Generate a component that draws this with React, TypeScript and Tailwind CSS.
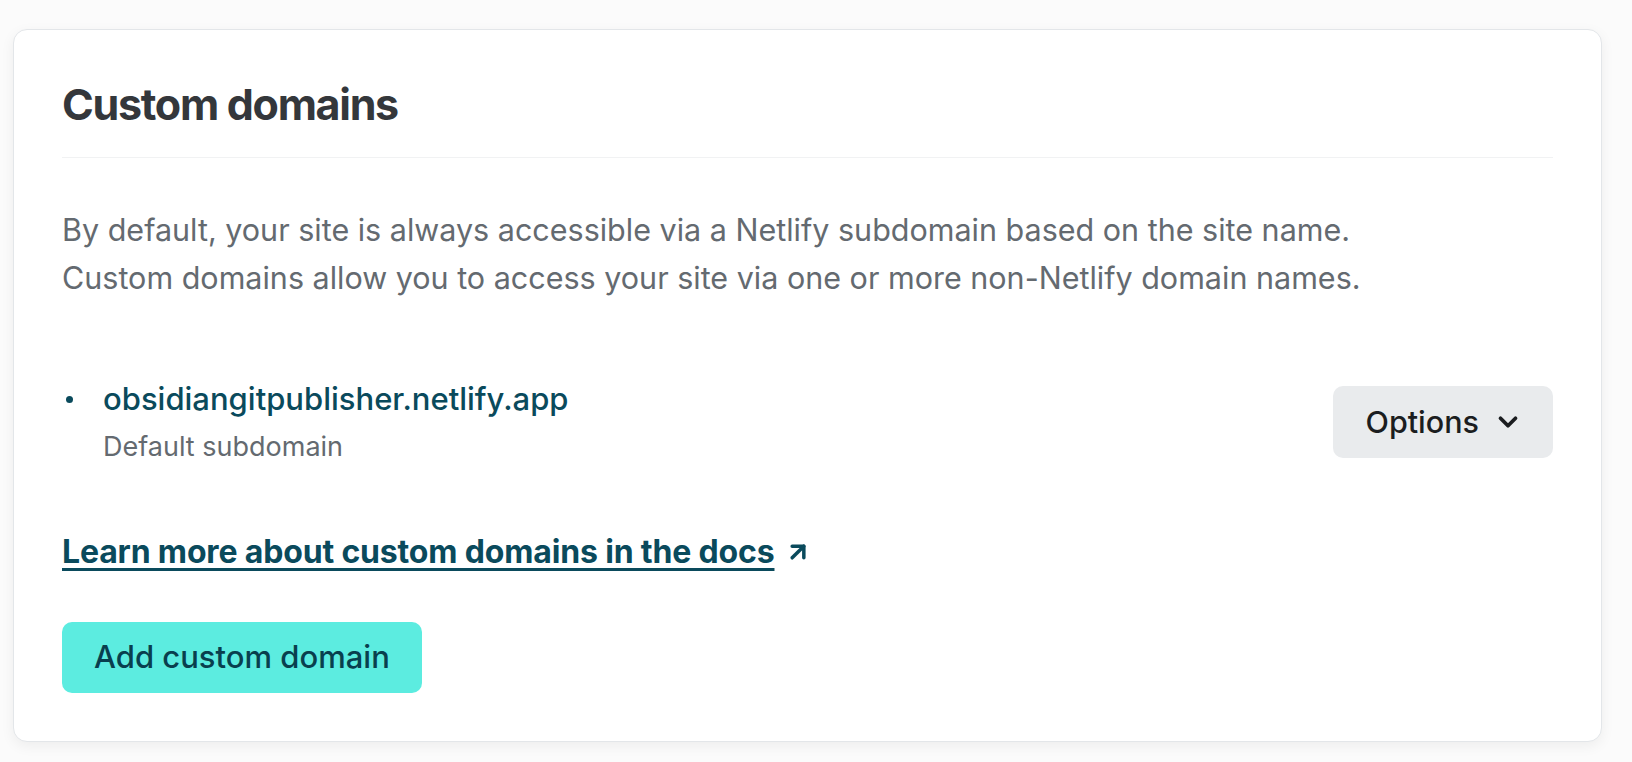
import React from 'react';
import { ArrowUpRight, ChevronDown } from 'lucide-react';

const font = { fontFamily: 'Inter, "Noto Sans", sans-serif' };

export default function App() {
  return (
    <div className="min-h-screen w-full bg-[#fbfbfb] pt-[29px] pl-[13px]" style={font}>
      <section className="w-[1589px] rounded-[14px] border border-[#e3e6e9] bg-white px-12 pt-12 pb-12 shadow-[0_4px_14px_rgba(0,0,0,0.06)]">
        {/* Header */}
        <div className="border-b border-[#f1f2f3] pb-[27px]">
          <h2 className="text-[43px] leading-[52px] font-bold tracking-[-0.03em] text-[#34373b]">Custom domains</h2>
        </div>

        <p className="mt-[48px] text-[30.5px] leading-[48px] text-[#646a70]">
          By default, your site is always accessible via a Netlify subdomain based on the site name.
          <br />
          Custom domains allow you to access your site via one or more non-Netlify domain names.
        </p>

        {/* Domain list */}
        <ul className="mt-[77px]">
          <li className="flex items-center justify-between">
            <div className="flex">
              <div className="flex h-10 w-[41px] items-center pl-[4px]">
                <span className="h-[7px] w-[7px] rounded-full bg-[#0a4a5c]" />
              </div>
              <div>
                <div className="text-[31px] leading-10 font-medium text-[#0a4a5c]">obsidiangitpublisher.netlify.app</div>
                <div className="mt-[10px] text-[27px] leading-9 text-[#646a70]">Default subdomain</div>
              </div>
            </div>
            <button className="flex h-[72px] items-center gap-[14px] rounded-[10px] bg-[#e9ebed] pl-[33px] pr-[30px] text-[30.5px] font-medium text-[#1b1d20]">
              Options
              <ChevronDown size={30} strokeWidth={3} />
            </button>
          </li>
        </ul>

        {/* Docs link */}
        <div className="mt-[67px] flex items-center gap-[10px] text-[#0a4a5c]">
          <a href="#" className="text-[32px] leading-10 font-bold tracking-[-0.005em] underline decoration-[2.5px] underline-offset-[5px]">
            Learn more about custom domains in the docs
          </a>
          <ArrowUpRight size={28} strokeWidth={3} />
        </div>

        <button className="mt-[50px] h-[71px] rounded-[10px] bg-[#5cece0] px-8 text-[31px] font-medium text-[#093f4e]">
          Add custom domain
        </button>
      </section>
    </div>
  );
}
